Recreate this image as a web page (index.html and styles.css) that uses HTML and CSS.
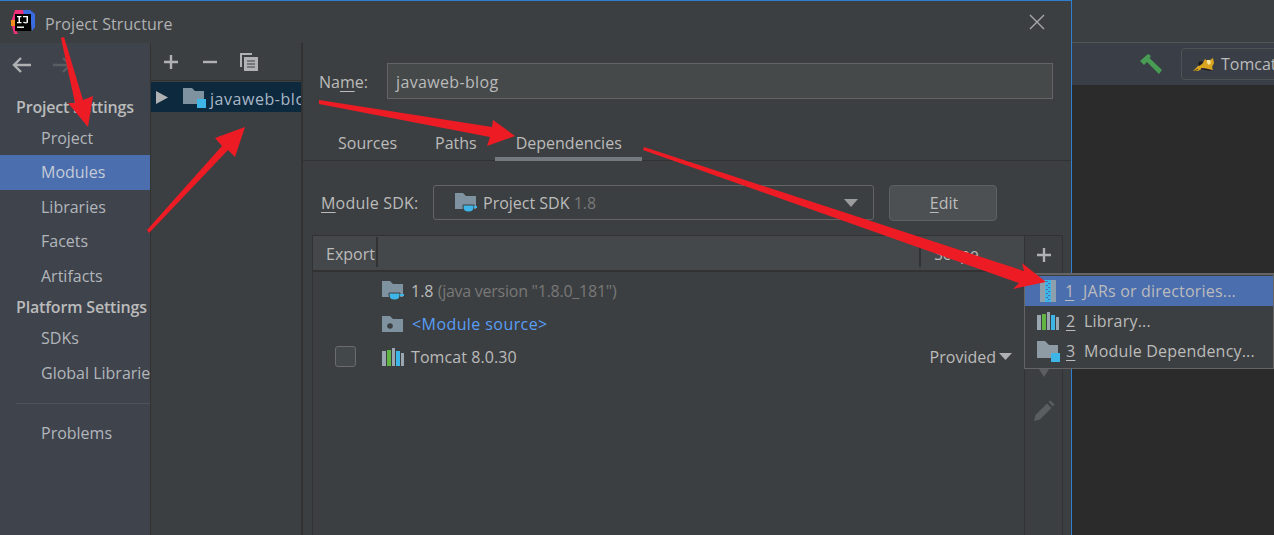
FILE: index.html
```html
<!DOCTYPE html>
<html lang="en">
<head>
<meta charset="utf-8">
<title>Project Structure</title>
<link rel="stylesheet" href="styles.css">
</head>
<body>
<div class="dialog">
  <header class="titlebar">
    <svg class="logo" width="24" height="24" viewBox="0 0 24 24">
      <path d="M4 0h9l1 5H5v15l2 4H3L1 16V9z" fill="#ee2f7a"/>
      <path d="M12 0h7l5 4v13l-3 4-2-16h-6z" fill="#3a6be0"/>
      <path d="M0 10h5v6H0z" fill="#f58a1f"/>
      <rect x="4" y="4" width="16" height="17" fill="#000"/>
      <path d="M6 6h4.500v1.200H9V12h1.500v1.200H6V12h1.500V7.200H6z M12 6h5v6c0 1-.9 1.400-2.300 1.400s-2.300-.4-2.700-1.100l1-.8c.3.500.8.700 1.500.7.800 0 1-.2 1-.8V7.200H12z" fill="#fff"/>
      <rect x="6" y="16.500" width="7" height="1.400" fill="#fff"/>
    </svg>
    <span class="title">Project Structure</span>
    <svg class="close" width="16" height="16" viewBox="0 0 16 16"><path d="M1 1l14 14M15 1L1 15" stroke="#a9a9a9" stroke-width="1.400" fill="none"/></svg>
  </header>
  <div class="dialog-body">
    <nav class="sidebar">
      <div class="nav-arrows">
        <svg width="22" height="18" viewBox="0 0 22 18"><path d="M20 9H3M10 2 3 9l7 7" stroke="#afb1b3" stroke-width="2.400" fill="none"/></svg>
        <svg width="22" height="18" viewBox="0 0 22 18"><path d="M2 9h17M12 2l7 7-7 7" stroke="#5b5e60" stroke-width="2.400" fill="none"/></svg>
      </div>
      <div class="nav-head first">Project Settings</div>
      <div class="nav-item short">Project</div>
      <div class="nav-item active">Modules</div>
      <div class="nav-item">Libraries</div>
      <div class="nav-item">Facets</div>
      <div class="nav-item">Artifacts</div>
      <div class="nav-head">Platform Settings</div>
      <div class="nav-item">SDKs</div>
      <div class="nav-item">Global Libraries</div>
      <div class="nav-sep"></div>
      <div class="nav-item">Problems</div>
    </nav>
    <section class="modules">
      <div class="mod-toolbar">
        <svg width="18" height="18" viewBox="0 0 18 18"><path d="M9 2v14M2 9h14" stroke="#afb1b3" stroke-width="2.400"/></svg>
        <svg width="18" height="18" viewBox="0 0 18 18"><path d="M2 9h14" stroke="#afb1b3" stroke-width="2.400"/></svg>
        <svg width="20" height="20" viewBox="0 0 20 20"><path d="M1 1h12v2H3v12H1z" fill="#afb1b3"/><path d="M5 5h14v14H5z" fill="#afb1b3"/><path d="M8 9h8M8 12h8M8 15h8" stroke="#3c3f41" stroke-width="1.200"/></svg>
      </div>
      <div class="mod-row">
        <svg class="tri" width="12" height="13" viewBox="0 0 12 13"><path d="M0 0l12 6.500L0 13z" fill="#afb1b3"/></svg>
        <svg class="mod-icon" width="23" height="21" viewBox="0 0 23 21"><path d="M0 1h9l3 3h9v13H0z" fill="#7f929f"/><rect x="14" y="12" width="9" height="9" fill="#3db5e6"/></svg>
        <span class="mod-name">javaweb-blog</span>
      </div>
    </section>
    <main class="detail">
      <div class="name-row">
        <label class="name-label">Na<u>m</u>e:</label>
        <div class="name-input">javaweb-blog</div>
      </div>
      <div class="tabs">
        <span class="tab">Sources</span>
        <span class="tab">Paths</span>
        <span class="tab selected">Dependencies</span>
      </div>
      <div class="sdk-row">
        <label class="sdk-label"><u>M</u>odule SDK:</label>
        <div class="combo">
          <svg width="23" height="21" viewBox="0 0 23 21"><path d="M0 1h8l3 3h10v13H0z" fill="#7f929f"/><path d="M8 13h11v2c0 3-2 5-5 5h-1c-3 0-5-2-5-5z" fill="#3db5e6" stroke="#3c3f41"/><path d="M19 14h3v2h-3z" fill="#3db5e6"/></svg>
          <span class="combo-text">Project SDK <span class="dim">1.8</span></span>
          <svg class="combo-caret" width="14" height="8" viewBox="0 0 14 8"><path d="M0 0h14L7 8z" fill="#9a9c9e"/></svg>
        </div>
        <button class="edit-btn"><u>E</u>dit</button>
      </div>
      <div class="table-wrap">
        <div class="table">
          <div class="thead">
            <div class="th-export">Export</div>
            <div class="th-fill"></div>
            <div class="th-scope">Scope</div>
          </div>
          <div class="tr">
            <span class="td-check"></span>
            <svg width="23" height="21" viewBox="0 0 23 21"><path d="M0 1h8l3 3h10v13H0z" fill="#7f929f"/><path d="M7 13h11v2c0 3-2 5-5 5h-1c-3 0-5-2-5-5z" fill="#3db5e6" stroke="#3c3f41"/><path d="M18 14h4v2h-4z" fill="#3db5e6"/></svg>
            <span class="td-text">1.8 <span class="dim tight">(java version "1.8.0_181")</span></span>
          </div>
          <div class="tr">
            <span class="td-check"></span>
            <svg width="23" height="18" viewBox="0 0 23 18"><path d="M0 1h8l3 3h10v13H0z" fill="#7f929f"/><circle cx="8" cy="11" r="2.800" fill="#3c3f41"/></svg>
            <span class="td-text link">&lt;Module source&gt;</span>
          </div>
          <div class="tr">
            <span class="td-check"><span class="checkbox"></span></span>
            <svg width="23" height="20" viewBox="0 0 23 20"><rect x="0" y="4" width="4" height="15" fill="#9aa7b0"/><rect x="5" y="3" width="4" height="16" fill="#62b543"/><rect x="10" y="1" width="3" height="18" fill="#9aa7b0"/><rect x="14" y="4" width="4" height="15" fill="#3db5e6"/><rect x="19" y="6" width="3" height="13" fill="#9aa7b0"/></svg>
            <span class="td-text">Tomcat 8.0.30</span>
            <span class="td-scope">Provided <svg width="13" height="7" viewBox="0 0 13 7"><path d="M0 0h13L6.500 7z" fill="#afb1b3"/></svg></span>
          </div>
        </div>
        <aside class="table-tools">
          <svg class="tool-plus" width="16" height="16" viewBox="0 0 16 16"><path d="M8 1v14M1 8h14" stroke="#afb1b3" stroke-width="2.400"/></svg>
          <svg class="tool-down" width="18" height="14" viewBox="0 0 18 14"><path d="M0 0h18L9 14z" fill="#5b5e60"/></svg>
          <svg class="tool-edit" width="22" height="22" viewBox="0 0 22 22"><path d="M1 21l1.500-6L14 3.500l4.500 4.500L7 19.500z M15.500 2l2-1.500 4 4L20 6.500z" fill="#5b5e60"/></svg>
        </aside>
      </div>
    </main>
  </div>
</div>
<div class="ide">
  <div class="ide-top"></div>
  <div class="ide-toolbar">
    <svg class="hammer" width="24" height="22" viewBox="0 0 24 22"><path d="M0 8 8 1l3 2-1.500 2L22 17l-3 4L7 9l-3 3z" fill="#499c54"/></svg>
    <div class="run-config">
      <svg width="22" height="15" viewBox="0 0 22 15"><path d="M0 14 5 9l5-3 2-4 2 1.500L17 3l3-2 1 5-2 4 1 3-5-1-5-1-5 3z" fill="#d9a520"/><path d="M14 3l3 0 1 3-2 2-2-2z" fill="#f3e29a"/><path d="M6 9C4 6 6 3 10 5L9 7z M8 11l7 1 5 2-6-.5-6-1.500z M0 14l5-2v1z" fill="#1e1e1e"/></svg>
      <span>Tomcat 8.0.30</span>
    </div>
  </div>
  <div class="ide-editor"></div>
</div>
<div class="popup">
  <div class="popup-row current">
    <svg width="16" height="22" viewBox="0 0 16 22"><rect x="0" y="0" width="16" height="22" fill="#8ea0ad"/><rect x="5" y="0" width="6" height="22" fill="#3db5e6"/><path d="M6 1.500h2M8 3.500h2M6 5.500h2M8 7.500h2M6 9.500h2M8 11.500h2M6 13.500h2M8 15.500h2M6 17.500h2M8 19.500h2" stroke="#4b6eaf" stroke-width="1"/></svg>
    <span class="popup-text"><u>1</u>&nbsp; JARs or directories...</span>
  </div>
  <div class="popup-row">
    <svg width="23" height="20" viewBox="0 0 23 20"><rect x="0" y="4" width="4" height="15" fill="#9aa7b0"/><rect x="5" y="3" width="4" height="16" fill="#62b543"/><rect x="10" y="1" width="3" height="18" fill="#9aa7b0"/><rect x="14" y="4" width="4" height="15" fill="#3db5e6"/><rect x="19" y="6" width="3" height="13" fill="#9aa7b0"/></svg>
    <span class="popup-text"><u>2</u>&nbsp; Library...</span>
  </div>
  <div class="popup-row">
    <svg width="23" height="21" viewBox="0 0 23 21"><path d="M0 0h8l4 4h9v13H0z" fill="#8e9ba5"/><rect x="14" y="12" width="9" height="9" fill="#3db5e6"/></svg>
    <span class="popup-text"><u>3</u>&nbsp; Module Dependency...</span>
  </div>
</div>
<svg class="arrows" width="1274" height="535" viewBox="0 0 1274 535">
  <g fill="#ed1c24">
    <path d="M61 38 64 37 83 100 93 96 88 127 68 103 75 103z"/>
    <path d="M147 230 222 146 215 138 245 127 235 157 228 150 149 233z"/>
    <path d="M319 100 492 127 493 120 515 136 487 146 490 137 319 104z"/>
    <path d="M644 147 1024 271 1022 263 1046 282 1013 289 1019 283 643 150z"/>
  </g>
</svg>
</body>
</html>
```
FILE: styles.css
```css
* { box-sizing: border-box; }
html, body { margin: 0; height: 100%; }
body {
  display: flex;
  width: 1274px;
  height: 535px;
  overflow: hidden;
  position: relative;
  background: #2b2b2b;
  color: #bbbbbb;
  font-family: "Open Sans", "Noto Sans", sans-serif;
  font-size: 16px;
}
svg { flex: none; display: block; }
u { text-underline-offset: 3px; }
.dim { color: #787878; }
.tight { letter-spacing: -0.25px; }

.dialog {
  width: 1072px;
  flex: none;
  display: flex;
  flex-direction: column;
  background: #3c3f41;
  border-top: 1px solid #2f7fd0;
  border-right: 1px solid #2f7fd0;
}
.titlebar {
  height: 42px;
  flex: none;
  display: flex;
  align-items: center;
  padding: 0 26px 0 11px;
  gap: 10px;
}
.title { flex: 1; color: #afb1b3; padding-top: 3px; letter-spacing: 0.1px; }
.dialog-body { flex: 1; display: flex; min-height: 0; }

.sidebar {
  width: 151px;
  flex: none;
  background: #3e434c;
  border-right: 1px solid #323232;
  overflow: hidden;
  white-space: nowrap;
}
.nav-arrows {
  display: flex;
  gap: 18px;
  padding: 13px 0 0 11px;
  height: 43px;
}
.nav-head {
  height: 28px;
  line-height: 28px;
  padding-left: 16px;
  font-weight: 600;
  letter-spacing: -0.17px;
  color: #bbbbbb;
}
.nav-head.first { height: 35px; line-height: 42px; }
.nav-item { height: 34.500px; line-height: 34px; padding-left: 41px; color: #b2b6bb; }
.nav-item.short { height: 33.500px; }
.nav-item.active { background: #4b6eaf; color: #c4cbd6; height: 35px; }
.nav-sep { height: 1px; margin: 13px 0 12px 16px; background: #505356; }

.modules {
  width: 152px;
  flex: none;
  border-right: 2px solid #323232;
  overflow: hidden;
}
.mod-toolbar {
  height: 38px;
  display: flex;
  align-items: center;
  gap: 21px;
  padding: 0 0 0 11px;
  border-bottom: 1px solid #323232;
}
.mod-toolbar svg:last-child { margin-left: -1px; }
.mod-row {
  height: 30px;
  margin-top: 1px;
  display: flex;
  align-items: center;
  background: #0d293e;
  white-space: nowrap;
  padding-left: 5px;
  overflow: hidden;
}
.tri { margin-right: 15px; }
.mod-icon { margin-right: 4px; }
.mod-name { color: #a9b7c6; padding-top: 3px; letter-spacing: 0.55px; }

.detail { flex: 1; display: flex; flex-direction: column; min-width: 0; }
.name-row { display: flex; align-items: center; padding: 20px 18px 0 16px; }
.name-label { width: 68px; padding-top: 2px; }
.name-input {
  flex: 1;
  height: 36px;
  line-height: 37px;
  padding-left: 8px;
  background: #45494a;
  border: 1px solid #646464;
  letter-spacing: 0.35px;
}
.tabs {
  display: flex;
  height: 62px;
  padding-top: 26px;
  margin-bottom: 24px;
  border-bottom: 1px solid #323232;
}
.tab { height: 36px; line-height: 36px; margin-left: 38px; }
.tab:first-child { margin-left: 35px; }
.tab.selected { margin-left: 18px; padding: 0 20px 0 21px; border-bottom: 4px solid #747a80; }
.sdk-row { display: flex; align-items: center; padding-left: 18px; height: 35px; }
.sdk-label { width: 112px; letter-spacing: 0.2px; }
.combo {
  width: 441px;
  height: 35px;
  display: flex;
  align-items: center;
  gap: 5px;
  padding: 0 15px 0 21px;
  border: 1px solid #646464;
  border-radius: 3px;
}
.combo-text { flex: 1; padding-top: 1px; }
.edit-btn {
  width: 108px;
  height: 36px;
  margin-left: 15px;
  padding: 1px 0 0 2px;
  background: #4c5052;
  border: 1px solid #5e6060;
  border-radius: 4px;
  color: #bbbbbb;
  font: inherit;
}
.table-wrap {
  flex: 1;
  display: flex;
  margin: 15px 8px 0 9px;
  border-left: 1px solid #323232;
  border-right: 1px solid #323232;
  border-top: 1px solid #323232;
  min-height: 0;
}
.table { flex: 1; min-width: 0; border-right: 1px solid #323232; }
.thead {
  display: flex;
  height: 36px;
  line-height: 36px;
  background: #45484a;
  border-bottom: 2px solid #323232;
}
.th-export { width: 65px; padding-left: 13px; border-right: 2px solid #323232; margin: 1px 0 3px; line-height: 34px; }
.th-fill { flex: 1; }
.th-scope { width: 105px; padding-left: 13px; border-left: 2px solid #323232; margin: 1px 0 3px; line-height: 34px; }
.tr { display: flex; align-items: center; height: 33px; }
.tr:nth-child(2) { margin-top: 2px; }
.td-check { width: 69px; display: flex; padding-left: 22px; }
.checkbox { width: 21px; height: 21px; border: 1px solid #6b6b6b; border-radius: 3px; background: #43494a; }
.td-text { margin-left: 6px; flex: 1; white-space: nowrap; }
.tr:nth-child(3) .td-text { margin-left: 7px; letter-spacing: 0.42px; }
.tr:nth-child(4) .td-text { letter-spacing: 0.08px; }
.link { color: #589df6; }
.td-scope { display: flex; align-items: center; gap: 3px; padding-right: 12px; }
.table-tools { width: 37px; display: flex; flex-direction: column; align-items: center; padding-top: 11px; }
.tool-down { margin-top: 100px; }
.tool-edit { margin-top: 23px; }

.ide { flex: 1; display: flex; flex-direction: column; min-width: 0; }
.ide-top { height: 43px; background: #3c3f41; border-bottom: 1px solid #515658; flex: none; }
.ide-toolbar {
  height: 42px;
  flex: none;
  display: flex;
  align-items: center;
  background: #3a3f47;
  padding-left: 68px;
  gap: 17px;
}
.run-config {
  display: flex;
  align-items: center;
  gap: 6px;
  height: 32px;
  padding-left: 11px;
  border: 1px solid #4e5254;
  border-radius: 4px;
  white-space: nowrap;
  line-height: 34px;
}
.ide-editor { flex: 1; background: #2b2b2b; }

.popup {
  position: absolute;
  left: 1024px;
  top: 273px;
  width: 250px;
  height: 96px;
  padding-top: 1px;
  background: #3c3f41;
  border: 2px solid #646464;
  border-width: 2px 1px 1px 1px;
}
.popup-row { height: 30px; display: flex; align-items: center; padding-left: 12px; white-space: nowrap; gap: 6px; }
.popup-row.current { background: #4b6eaf; padding-left: 15px; gap: 9px; }
.popup-text { color: #bbbbbb; letter-spacing: 0.2px; }

.arrows { position: absolute; left: 0; top: 0; pointer-events: none; }
```
